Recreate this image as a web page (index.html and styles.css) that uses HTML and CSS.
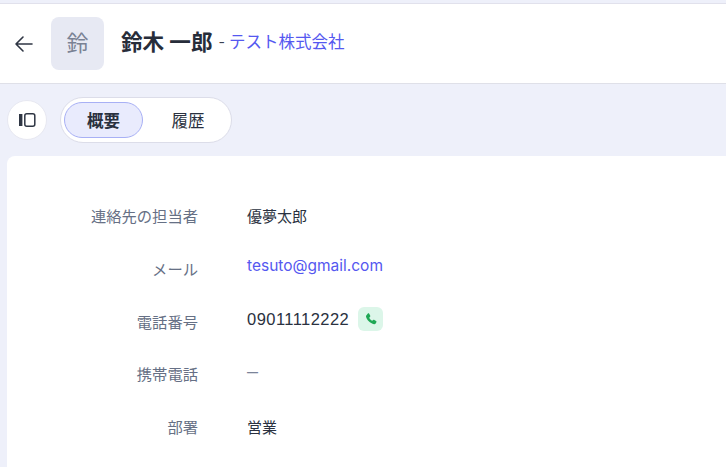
FILE: index.html
```html
<!DOCTYPE html>
<html lang="ja">
<head>
<meta charset="utf-8">
<title>鈴木 一郎</title>
<link rel="stylesheet" href="styles.css">
</head>
<body>
<div class="page">
  <header class="header">
    <button class="back" aria-label="戻る">
      <svg width="20" height="20" viewBox="0 0 20 20" fill="none" stroke="#2f3644" stroke-width="1.6" stroke-linecap="round" stroke-linejoin="round"><path d="M18 10H2M9 3l-7 7 7 7"/></svg>
    </button>
    <div class="avatar"><span class="avatar-text">鈴</span></div>
    <h1 class="name">鈴木 一郎</h1>
    <span class="dash">-</span>
    <a class="company">テスト株式会社</a>
  </header>
  <div class="toolbar">
    <button class="panel-btn" aria-label="パネル">
      <svg width="18" height="16" viewBox="0 0 18 16" fill="none"><rect x="1" y="2" width="3.4" height="12" fill="#2f3644"/><rect x="6.8" y="1.800" width="10" height="12.400" rx="2" stroke="#2f3644" stroke-width="1.500"/></svg>
    </button>
    <div class="tabs">
      <span class="tab active">概要</span>
      <span class="tab tab-plain">履歴</span>
    </div>
  </div>
  <main class="card">
    <div class="row">
      <span class="label">連絡先の担当者</span>
      <span class="value">優夢太郎</span>
    </div>
    <div class="row row-mail">
      <span class="label">メール</span>
      <a class="value link">tesuto@gmail.com</a>
    </div>
    <div class="row row-phone">
      <span class="label">電話番号</span>
      <span class="value phone">09011112222</span>
      <span class="call">
        <svg width="14" height="14" viewBox="0 0 24 24" fill="#1fa855"><path d="M6.600 2.600c.8-.5 1.800-.3 2.300.5l1.700 3c.4.7.3 1.500-.2 2.100L9 9.800c.9 2 2.900 4.100 5 5.100l1.700-1.300c.6-.5 1.400-.5 2.100-.1l2.900 1.800c.8.500 1 1.500.5 2.300l-1.200 2c-.6 1-1.700 1.500-2.800 1.300C10.500 19.500 4.600 13.500 3.400 7.800c-.2-1.100.2-2.200 1.200-2.800z"/></svg>
      </span>
    </div>
    <div class="row">
      <span class="label">携帯電話</span>
      <span class="value empty">—</span>
    </div>
    <div class="row">
      <span class="label">部署</span>
      <span class="value">営業</span>
    </div>
  </main>
</div>
</body>
</html>
```

FILE: styles.css
```css
* { box-sizing: border-box; }
html, body { margin: 0; height: 100%; overflow: hidden; }
body {
  font-family: Inter, "Noto Sans CJK JP", sans-serif;
  background: #eef0fa;
  color: #2a3140;
}
.page { height: 467px; display: flex; flex-direction: column; }
.header {
  height: 81px;
  margin-top: 3px;
  background: #fff;
  border-top: 1px solid #e1e1ec;
  border-bottom: 1px solid #dfe0e8;
  display: flex;
  align-items: center;
  padding-left: 14px;
  flex: none;
}
.back { border: 0; background: none; padding: 0; width: 20px; height: 20px; display: flex; }
.avatar {
  width: 53px; height: 53px; margin-left: 17px;
  border-radius: 8px;
  background: #e7e9f3;
  color: #7a8294;
  font-size: 22px;
  display: flex; align-items: center; justify-content: center;
}
.avatar-text { margin-bottom: 6px; }
.name { margin: 0 0 4px 17px; font-size: 21.600px; font-weight: 700; color: #272d3a; line-height: 28px; }
.dash { margin: 0 0 4px 6px; font-size: 14px; color: #3a4150; }
.company { margin: 0 0 6px 4px; font-size: 16.500px; color: #5558f0; }
.toolbar { height: 72px; flex: none; display: flex; align-items: flex-start; padding: 13px 0 0 7px; gap: 13px; }
.panel-btn {
  width: 40px; height: 40px; margin-top: 3px;
  border-radius: 50%; border: 1px solid #e7e8f1; background: #fff; padding: 0;
  display: flex; align-items: center; justify-content: center;
}
.tabs {
  width: 172px; height: 46px;
  border: 1px solid #dcdde9; border-radius: 23px; background: #fff;
  padding: 4px 3px;
  display: flex;
}
.tab {
  flex: none;
  width: 79px; height: 36px;
  border-radius: 18px;
  display: flex; align-items: center; justify-content: center;
  font-size: 16.500px;
  color: #2a3140;
}
.tab-plain { width: 74px; margin-left: 8px; }
.tab.active { background: #e9ebfd; border: 1px solid #a8b0f5; font-weight: 700; }
.card {
  flex: 1;
  margin-left: 7px;
  background: #fff;
  border-radius: 8px 0 0 0;
  padding-top: 33px;
}
.row {
  display: flex; align-items: center;
  height: 52.700px;
}
.label {
  width: 191px;
  text-align: right;
  font-size: 15.300px;
  color: #667085;
}
.value { margin-left: 49px; font-size: 15px; color: #2a3140; }
.link { color: #5558f0; }
.phone { font-family: "Liberation Sans", sans-serif; font-size: 16.500px; letter-spacing: 0.45px; }
.empty { font-size: 11px; font-weight: 700; color: #7b8499; position: relative; top: -1px; }
.row-mail .value { position: relative; top: -3px; font-size: 15.500px; }
.row-phone .value { position: relative; top: -1px; }
.row-phone .call { position: relative; top: -2px; }
.call {
  width: 25px; height: 24px; margin-left: 9px;
  border-radius: 6px;
  background: #dcf6e9;
  display: flex; align-items: center; justify-content: center;
}
```
